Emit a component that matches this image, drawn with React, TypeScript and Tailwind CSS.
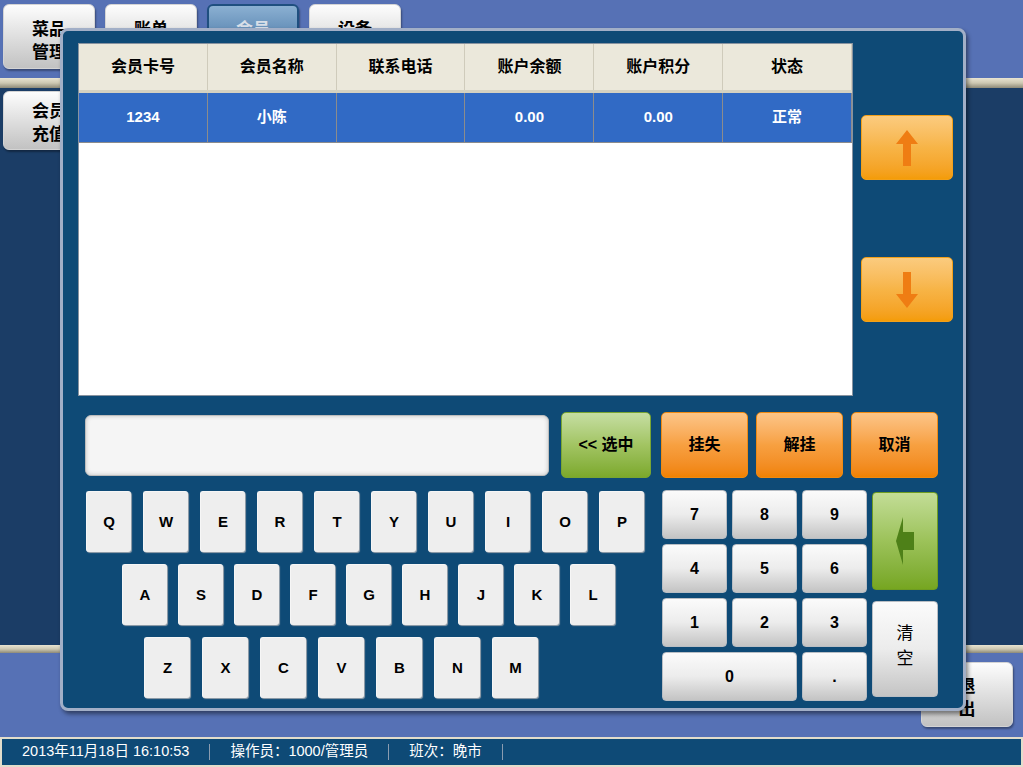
import React from 'react';

const FONT = "font-['Liberation_Sans','Noto_Sans_CJK_SC',sans-serif]";

const HEADERS = ['会员卡号', '会员名称', '联系电话', '账户余额', '账户积分', '状态'];
const ROW = ['1234', '小陈', '', '0.00', '0.00', '正常'];

const ROW1 = ['Q', 'W', 'E', 'R', 'T', 'Y', 'U', 'I', 'O', 'P'];
const ROW2 = ['A', 'S', 'D', 'F', 'G', 'H', 'J', 'K', 'L'];
const ROW3 = ['Z', 'X', 'C', 'V', 'B', 'N', 'M'];

// grey tab / side button
function MenuButton({ lines, active = false }: { lines: string[]; active?: boolean }) {
  return (
    <div
      className={
        active
          ? 'w-[92px] h-[65px] rounded-[6px] border-2 border-[#1f4f7f] bg-gradient-to-b from-[#8bb0d2] to-[#2f6193] shadow-[1px_2px_2px_rgba(0,0,0,0.35)] flex flex-col items-center pt-[12px] text-[17px] leading-[23px] font-bold text-[#d8dfe8]'
          : 'w-[92px] h-[65px] rounded-[6px] border border-[#d4d4d4] bg-gradient-to-b from-[#fdfdfd] to-[#c2c2c2] shadow-[1px_2px_2px_rgba(0,0,0,0.35)] flex flex-col items-center pt-[13px] text-[17px] leading-[23px] font-bold text-black'
      }
    >
      {lines.map((l) => (
        <span key={l}>{l}</span>
      ))}
    </div>
  );
}

function ArrowButton({ dir }: { dir: 'up' | 'down' }) {
  return (
    <div className="w-[92px] h-[65px] rounded-[5px] border border-[#f2a01a] bg-gradient-to-b from-[#fbcb7e] via-[#f7b446] to-[#f49c06] flex items-center justify-center">
      <svg width="22" height="36" viewBox="0 0 22 36">
        {dir === 'up' ? (
          <polygon points="11,0 22,14 15,14 15,36 7,36 7,14 0,14" fill="#ef7d13" />
        ) : (
          <polygon points="7,0 15,0 15,22 22,22 11,36 0,22 7,22" fill="#ef7d13" />
        )}
      </svg>
    </div>
  );
}

function OrangeButton({ label }: { label: string }) {
  return (
    <div className="w-[87px] h-[66px] rounded-[5px] border border-[#ef8a12] bg-gradient-to-b from-[#fcc587] via-[#f7a040] to-[#f08200] flex items-center justify-center text-[16px] font-bold text-black">
      {label}
    </div>
  );
}

function LetterKey({ k, w = 'w-[45px]' }: { k: string; w?: string }) {
  return (
    <div
      className={`${w} h-[61px] rounded-[3px] bg-[#eeeeee] border-t border-l border-[#f6f6f6] shadow-[1px_1px_1px_#9aa3ad] flex items-center justify-center text-[15px] font-bold text-black`}
    >
      {k}
    </div>
  );
}

function NumKey({ k, wide = false }: { k: string; wide?: boolean }) {
  return (
    <div
      className={`${wide ? 'col-span-2' : ''} h-[49px] rounded-[4px] border border-[#b9bec4] bg-gradient-to-b from-[#fbfbfb] via-[#ececec] to-[#c4c4c4] flex items-center justify-center text-[16px] font-bold text-black`}
    >
      {k}
    </div>
  );
}

export default function App() {
  return (
    <div className={`relative w-[1023px] h-[767px] overflow-hidden flex flex-col ${FONT}`}>
      {/* top tabs */}
      <div className="h-[78px] bg-[#5671b5] flex gap-[10px] pl-[3px] pt-[4px]">
        <MenuButton lines={['菜品', '管理']} />
        <MenuButton lines={['账单']} />
        <MenuButton lines={['会员']} active />
        <MenuButton lines={['设备']} />
      </div>
      <div className="h-[10px] bg-gradient-to-b from-[#e8e4d2] via-[#cdc8b2] to-[#8e8a78]" />

      {/* side panel */}
      <div className="h-[557px] bg-[#1b3d66] pl-[3px] pt-[3px]">
        <div className="w-[92px] h-[59px] rounded-[6px] border border-[#d4d4d4] bg-gradient-to-b from-[#fdfdfd] to-[#c2c2c2] shadow-[1px_2px_2px_rgba(0,0,0,0.35)] flex flex-col items-center pt-[8px] text-[17px] leading-[23px] font-bold text-black">
          <span>会员</span>
          <span>充值</span>
        </div>
      </div>
      <div className="h-[8px] bg-gradient-to-b from-[#e8e4d2] via-[#cdc8b2] to-[#8e8a78]" />

      {/* lower band with exit */}
      <div className="h-[84px] bg-[#5671b5] flex justify-end pr-[10px] pt-[9px]">
        <div className="w-[92px] h-[65px] rounded-[6px] border border-[#d4d4d4] bg-gradient-to-b from-[#fdfdfd] to-[#c2c2c2] shadow-[1px_2px_2px_rgba(0,0,0,0.35)] flex flex-col items-center pt-[12px] text-[17px] leading-[23px] font-bold text-black">
          <span>退</span>
          <span>出</span>
        </div>
      </div>

      {/* status bar */}
      <div className="h-[30px] bg-[#0e4a76] border-2 border-[#e2ddcb] flex items-center pl-[20px] gap-[20px] text-[14.5px] text-white">
        <span>2013年11月18日 16:10:53</span>
        <span className="w-px h-[16px] bg-[#8a9cb0]" />
        <span>操作员：1000/管理员</span>
        <span className="w-px h-[16px] bg-[#8a9cb0]" />
        <span>班次：晚市</span>
        <span className="w-px h-[16px] bg-[#8a9cb0]" />
      </div>

      {/* member dialog */}
      <div className="absolute left-[60px] top-[28px] w-[906px] h-[683px] rounded-[8px] border-[3px] border-[#a2afc7] bg-[#0e4a76] shadow-[2px_3px_4px_rgba(0,0,0,0.45)] pt-[12px] pl-[15px] flex flex-col">
        <div className="flex gap-[8px]">
          {/* table */}
          <div className="w-[775px] h-[353px] border border-[#8893a0] bg-white flex flex-col">
            <div className="h-[49px] flex bg-[#ebe8db] border-b-[3px] border-[#d5d1c1]">
              {HEADERS.map((h) => (
                <div
                  key={h}
                  className="w-[129px] flex items-center justify-center border-r border-[#cfcbbb] text-[16px] font-bold text-black"
                >
                  {h}
                </div>
              ))}
            </div>
            <div className="h-[50px] flex bg-[#316ac5] border-b border-[#8c8c8c]">
              {ROW.map((c, i) => (
                <div
                  key={i}
                  className="w-[129px] flex items-center justify-center border-r border-[#8c8c8c] text-[15px] font-bold text-white"
                >
                  {c}
                </div>
              ))}
            </div>
          </div>

          {/* scroll buttons */}
          <div className="flex flex-col pt-[72px] gap-[77px]">
            <ArrowButton dir="up" />
            <ArrowButton dir="down" />
          </div>
        </div>

        {/* input + action buttons */}
        <div className="mt-[16px] ml-[7px] flex items-center">
          <div className="w-[464px] h-[61px] rounded-[6px] border border-[#bcbcbc] bg-[#f5f5f5] shadow-[inset_0_0_4px_#c4c4c4]" />
          <div className="ml-[12px] w-[90px] h-[66px] rounded-[5px] border border-[#79a532] bg-gradient-to-b from-[#c6dea2] via-[#a2c462] to-[#7ca92a] flex items-center justify-center text-[16px] font-bold text-black">
            &lt;&lt; 选中
          </div>
          <div className="ml-[10px] flex gap-[8px]">
            <OrangeButton label="挂失" />
            <OrangeButton label="解挂" />
            <OrangeButton label="取消" />
          </div>
        </div>

        {/* keyboard + numpad */}
        <div className="mt-[12px] ml-[7px] flex">
          <div className="w-[577px] mt-[1px] flex flex-col gap-[12px]">
            <div className="flex gap-[12px] pl-[1px]">
              {ROW1.map((k) => (
                <LetterKey key={k} k={k} />
              ))}
            </div>
            <div className="flex gap-[11px] pl-[37px]">
              {ROW2.map((k) => (
                <LetterKey key={k} k={k} />
              ))}
            </div>
            <div className="flex gap-[12px] pl-[59px]">
              {ROW3.map((k) => (
                <LetterKey key={k} k={k} w="w-[46px]" />
              ))}
            </div>
          </div>

          <div className="w-[205px] grid grid-cols-3 gap-[5px] content-start">
            {['7', '8', '9', '4', '5', '6', '1', '2', '3'].map((k) => (
              <NumKey key={k} k={k} />
            ))}
            <NumKey k="0" wide />
            <NumKey k="." />
          </div>

          <div className="ml-[5px] w-[66px] flex flex-col pt-[2px] gap-[11px]">
            <div className="h-[98px] rounded-[4px] border border-[#6e9c22] bg-gradient-to-b from-[#c3dd96] via-[#9cc259] to-[#76a620] flex items-center justify-center">
              <svg width="18" height="48" viewBox="0 0 18 48">
                <polygon points="0,24 7,0 7,15 18,15 18,33 7,33 7,48" fill="#4e8018" />
              </svg>
            </div>
            <div className="h-[96px] rounded-[4px] border border-[#b9bec4] bg-gradient-to-b from-[#fbfbfb] via-[#ececec] to-[#c4c4c4] flex flex-col items-center justify-center pb-[6px] text-[17px] leading-[25px] text-black">
              <span>清</span>
              <span>空</span>
            </div>
          </div>
        </div>
      </div>
    </div>
  );
}
